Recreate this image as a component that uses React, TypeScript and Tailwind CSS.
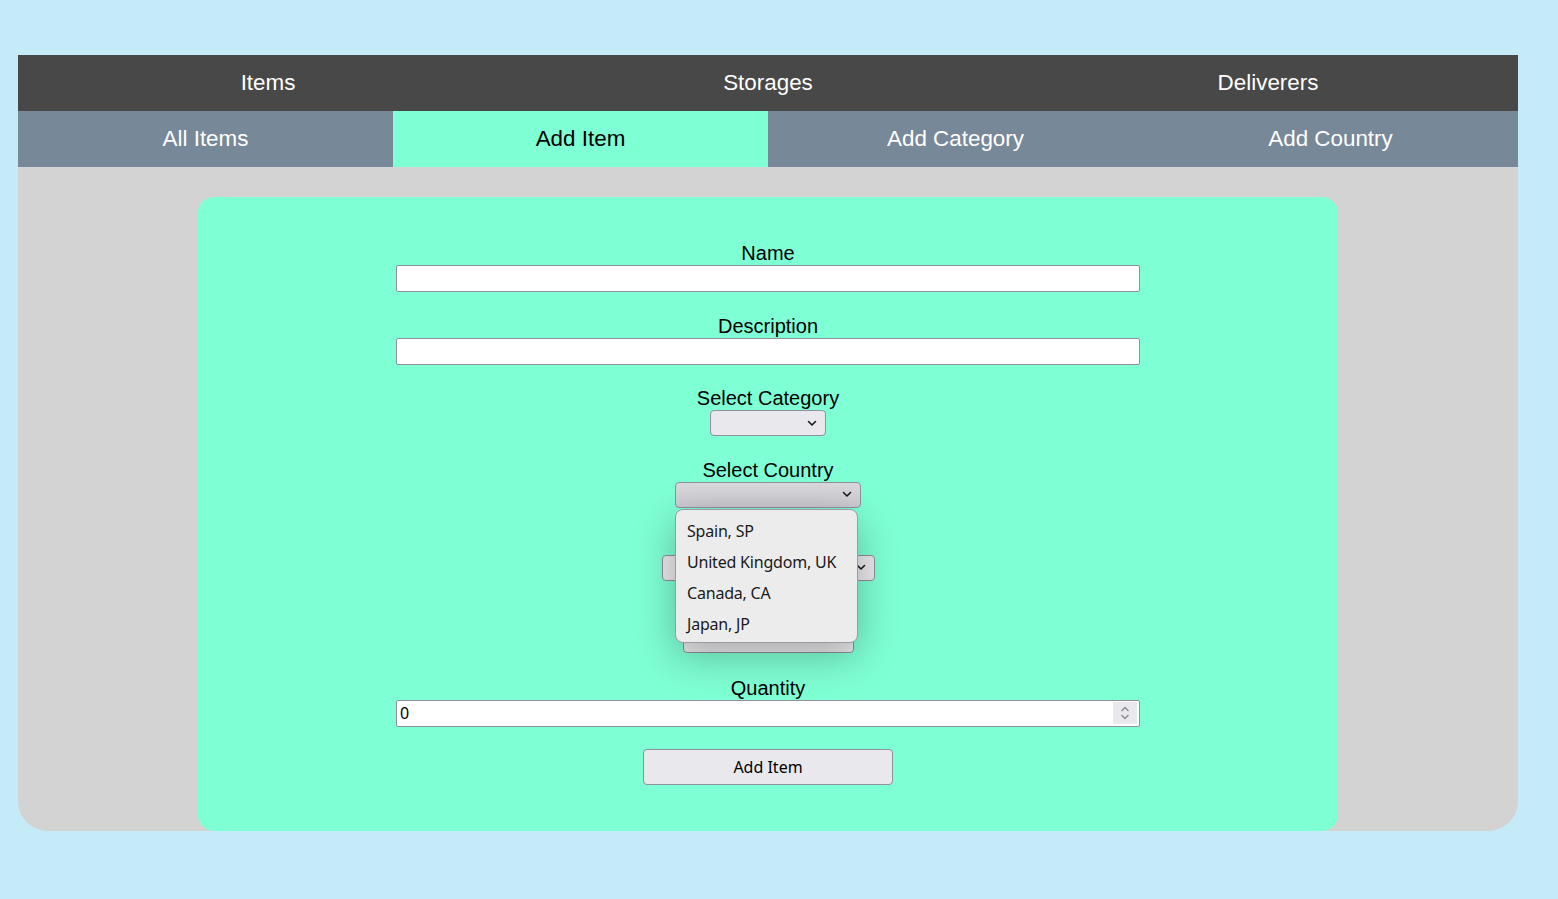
import React from "react";

const Chevron = ({ className = "" }: { className?: string }) => (
  <svg width="10" height="7" viewBox="0 0 10 7" className={className}>
    <path d="M1.5 1.5 L5 5 L8.5 1.5" fill="none" stroke="#1a1a1a" strokeWidth="1.6" strokeLinecap="round" strokeLinejoin="round" />
  </svg>
);

const FakeSelect = ({ w, pressed = false }: { w: string; pressed?: boolean }) => (
  <div
    className={`${w} h-[26px] rounded-[4px] border border-[#8f8f9d] flex items-center justify-end pr-[8px] ${
      pressed ? "bg-gradient-to-b from-[#dadade] to-[#c9c9cf] border-[#6f6f7d]" : "bg-[#e9e9ed]"
    }`}
  >
    <Chevron />
  </div>
);

const Label = ({ children, hidden = false }: { children: React.ReactNode; hidden?: boolean }) => (
  <div className={`h-[23px] leading-[23px] text-[20px] text-black text-center ${hidden ? "invisible" : ""}`}>{children}</div>
);

export default function App() {
  const sans = { fontFamily: '"Liberation Sans", Arial, sans-serif' };
  const ui = { fontFamily: '"Noto Sans", "Open Sans", sans-serif' };
  return (
    <div className="min-h-[899px] w-full bg-[#c5eaf8] pt-[55px] pl-[18px]" style={sans}>
      <div className="w-[1500px]">
        <div className="flex h-[56px] bg-[#484848] text-white text-[22.4px]">
          <div className="flex-1 flex items-center justify-center">Items</div>
          <div className="flex-1 flex items-center justify-center">Storages</div>
          <div className="flex-1 flex items-center justify-center">Deliverers</div>
        </div>
        <div className="flex h-[56px] bg-[#778899] text-white text-[22.4px]">
          <div className="flex-1 flex items-center justify-center">All Items</div>
          <div className="flex-1 flex items-center justify-center bg-[#7fffd4] text-black">Add Item</div>
          <div className="flex-1 flex items-center justify-center">Add Category</div>
          <div className="flex-1 flex items-center justify-center">Add Country</div>
        </div>
        <div className="bg-[#d3d3d3] rounded-b-[30px] pt-[30px] flex justify-center">
          <div className="w-[1140px] h-[634px] rounded-[16px] bg-[#7fffd4] flex flex-col items-center pt-[45px] gap-[22.5px]">
            <div className="flex flex-col items-center">
              <Label>Name</Label>
              <div className="w-[744px] h-[27px] bg-white border border-[#8f8f9d] rounded-[2px]" />
            </div>
            <div className="flex flex-col items-center">
              <Label>Description</Label>
              <div className="w-[744px] h-[27px] bg-white border border-[#8f8f9d] rounded-[2px]" />
            </div>
            <div className="flex flex-col items-center">
              <Label>Select Category</Label>
              <FakeSelect w="w-[116px]" />
            </div>
            <div className="flex flex-col items-center relative z-10">
              <Label>Select Country</Label>
              <div className="relative">
                <FakeSelect w="w-[186px]" pressed />
                <div
                  className="absolute left-0 top-[27px] w-[183px] h-[134px] rounded-[8px] bg-[#ececec] border border-[#9a9aa2] shadow-[0_12px_40px_rgba(0,0,0,0.28)] pt-[6px] text-[16px] text-[#1a1a1a]"
                  style={ui}
                >
                  {["Spain, SP", "United Kingdom, UK", "Canada, CA", "Japan, JP"].map((o) => (
                    <div key={o} className="h-[31px] leading-[31px] pl-[11px] tracking-[-0.2px]">
                      {o}
                    </div>
                  ))}
                </div>
              </div>
            </div>
            <div className="flex flex-col items-center mt-[1.5px]">
              <Label hidden>Select Storage</Label>
              <FakeSelect w="w-[213px]" />
            </div>
            <div className="flex flex-col items-center mt-[1px]">
              <Label hidden>Select Deliverer</Label>
              <FakeSelect w="w-[171px]" />
            </div>
            <div className="flex flex-col items-center mt-[1px]">
              <Label>Quantity</Label>
              <div className="w-[744px] h-[27px] bg-white border border-[#8f8f9d] rounded-[2px] flex items-center justify-between pl-[3px] pr-[2px]">
                <span className="text-[16px] text-black" style={ui}>0</span>
                <div className="w-[24px] h-[22px] bg-[#e9e9ed] flex flex-col items-center justify-center gap-[2px]">
                  <svg width="10" height="6" viewBox="0 0 10 6">
                    <path d="M1.5 5 L5 1.5 L8.5 5" fill="none" stroke="#8a8a95" strokeWidth="1.4" />
                  </svg>
                  <svg width="10" height="6" viewBox="0 0 10 6">
                    <path d="M1.5 1 L5 4.5 L8.5 1" fill="none" stroke="#8a8a95" strokeWidth="1.4" />
                  </svg>
                </div>
              </div>
            </div>
            <div
              className="w-[250px] h-[36px] bg-[#e9e9ed] border border-[#8f8f9d] rounded-[4px] flex items-center justify-center text-[16px] text-black"
              style={ui}
            >
              Add Item
            </div>
          </div>
        </div>
      </div>
    </div>
  );
}
